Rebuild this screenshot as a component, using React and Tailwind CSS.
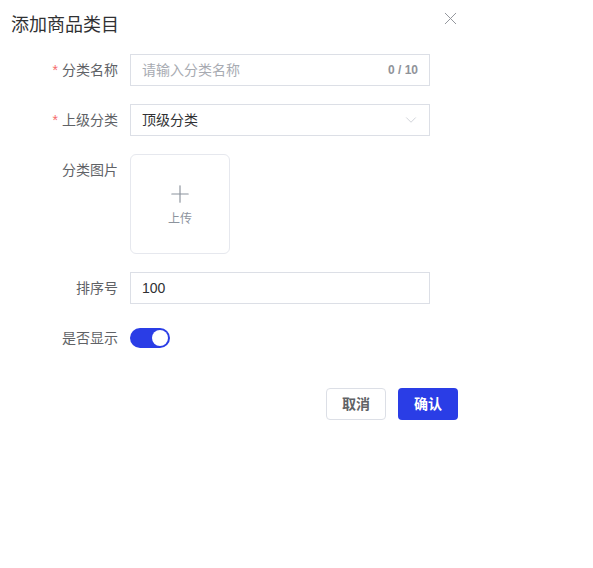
import { X, ChevronDown, Plus } from 'lucide-react';

const font = { fontFamily: '"Liberation Sans", "Noto Sans CJK SC", sans-serif' };

function Label({ children, required }) {
  return (
    <div className="w-[118px] shrink-0 h-8 flex items-center justify-end text-sm text-[#606266]">
      {required && <span className="text-[#f56c6c] mr-1">*</span>}
      {children}
    </div>
  );
}

export default function App() {
  return (
    <div className="w-[593px] h-[568px] bg-white" style={font}>
      <div className="w-[470px] relative">
        <div className="pl-[11px] pt-[14px] h-[54px] text-lg text-[#303133] leading-[22px]">添加商品类目</div>
        <button className="absolute left-[440px] top-[8px] text-[#909399]">
          <X size={21} strokeWidth={1.1} />
        </button>

        {/* form */}
        <div className="flex flex-col gap-[18px]">
          <div className="flex items-center gap-3">
            <Label required>分类名称</Label>
            <div className="w-[300px] h-8 border border-[#dcdfe6] flex items-center px-[11px]">
              <span className="flex-1 text-sm text-[#a8abb2]">请输入分类名称</span>
              <span className="text-xs font-semibold text-[#909399]">0 / 10</span>
            </div>
          </div>

          <div className="flex items-center gap-3">
            <Label required>上级分类</Label>
            <div className="w-[300px] h-8 border border-[#dcdfe6] flex items-center pl-[11px] pr-[9px]">
              <span className="flex-1 text-sm text-[#303133]">顶级分类</span>
              <ChevronDown size={18} strokeWidth={1} className="text-[#c0c4cc]" />
            </div>
          </div>

          <div className="flex items-start gap-3">
            <Label>分类图片</Label>
            <div className="w-[100px] h-[100px] border border-[#e6e8ee] rounded-md flex flex-col items-center justify-center text-[#8c939d]">
              <Plus size={28} strokeWidth={1} className="-mt-[2px]" />
              <span className="text-xs mt-[3px]">上传</span>
            </div>
          </div>

          <div className="flex items-center gap-3">
            <Label>排序号</Label>
            <div className="w-[300px] h-8 border border-[#dcdfe6] flex items-center px-[11px] text-sm text-[#303133]">100</div>
          </div>

          <div className="flex items-center gap-3">
            <Label>是否显示</Label>
            <div className="w-10 h-5 rounded-full bg-[#2a3de6] flex items-center justify-end pr-[2px]">
              <div className="w-4 h-4 rounded-full bg-white" />
            </div>
          </div>
        </div>

        <div className="flex justify-end gap-3 pr-3 mt-[34px]">
          <button className="w-[60px] h-8 border border-[#dcdfe6] rounded-sm text-sm font-semibold text-[#606266] bg-white">取消</button>
          <button className="w-[60px] h-8 bg-[#2a3de6] text-sm font-semibold text-white rounded-sm">确认</button>
        </div>
      </div>
    </div>
  );
}
